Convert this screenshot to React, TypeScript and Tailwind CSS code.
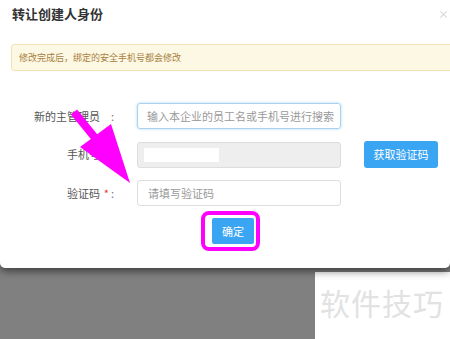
import React from "react";

const font = { fontFamily: '"Noto Sans CJK SC", "Noto Sans", sans-serif' };

function Label({ text, star }: { text: string; star?: boolean }) {
  return (
    <div className="flex items-center h-[26px] w-[137px] text-[11px] text-[#555]">
      <div className="w-[100px] text-right">{text}</div>
      <div className="w-[14px] text-right">
        {star ? <span className="text-[#e4393c] mr-[2px]">*</span> : null}
        <span className="text-[#777]">:</span>
      </div>
    </div>
  );
}

export default function App() {
  return (
    <div className="relative w-[450px] h-[339px] overflow-hidden bg-[#808080]" style={font}>
      <div className="relative h-[268px] bg-white rounded-b-[5px] shadow-[0_3px_8px_rgba(0,0,0,0.55)]">
        <div className="flex items-center justify-between h-[27px] pl-[12px] pr-[1px] pt-[1px]">
          <span className="text-[13px] font-bold text-[#333]">转让创建人身份</span>
          <span className="text-[11px] text-[#d0d0d0]">×</span>
        </div>
        <div className="mt-[17px] ml-[11px] -mr-[4px] h-[27px] flex items-center pl-[7px] bg-[#fcf8e3] border border-[#f3e2b3] rounded-[3px] text-[9px] text-[#a9803f]">
          修改完成后，绑定的安全手机号都会修改
        </div>
        <div className="mt-[32px] flex flex-col gap-[12px]">
          <div className="flex items-center">
            <Label text="新的主管理员" />
            <div className="w-[204px] h-[26px] border border-[#a8d2f2] rounded-[3px] shadow-[0_0_3px_rgba(102,175,233,0.5)] flex items-center pl-[9px] text-[11px] text-[#999] whitespace-nowrap overflow-hidden">
              输入本企业的员工名或手机号进行搜索
            </div>
          </div>
          <div className="flex items-center">
            <Label text="手机号" />
            <div className="w-[204px] h-[26px] border border-[#ddd] rounded-[3px] bg-[#eee] flex items-center pl-[6px]">
              <div className="w-[75px] h-[14px] bg-white" />
            </div>
            <div className="ml-[23px] w-[74px] h-[27px] rounded-[3px] bg-[#3aa5f2] flex items-center justify-center text-[11px] text-white">
              获取验证码
            </div>
          </div>
          <div className="flex items-center">
            <Label text="验证码" star />
            <div className="w-[204px] h-[26px] border border-[#ddd] rounded-[3px] bg-white flex items-center pl-[10px] text-[11px] text-[#999]">
              请填写验证码
            </div>
          </div>
        </div>
        <div className="mt-[5px] ml-[201px] w-[59px] h-[40px] border-[4px] border-[#ff00ff] rounded-[8px] flex items-center pl-[7px]">
          <div className="w-[42px] h-[26px] bg-[#3aa5f2] rounded-[2px] flex items-center justify-center text-[11px] text-white">
            确定
          </div>
        </div>
        <svg className="absolute left-0 top-0 pointer-events-none" width="450" height="268">
          <line x1="74" y1="112" x2="100" y2="144" stroke="#ff00ff" strokeWidth="8" />
          <polygon points="80,147 111,124 130,183" fill="#ff00ff" />
        </svg>
      </div>
      <div className="mt-[4px] ml-[315px] h-[80px] bg-white pl-[5px] pt-[8px]">
        <span className="text-[30px] text-[#e2e2e2] tracking-[1px]">软件技巧</span>
      </div>
    </div>
  );
}
